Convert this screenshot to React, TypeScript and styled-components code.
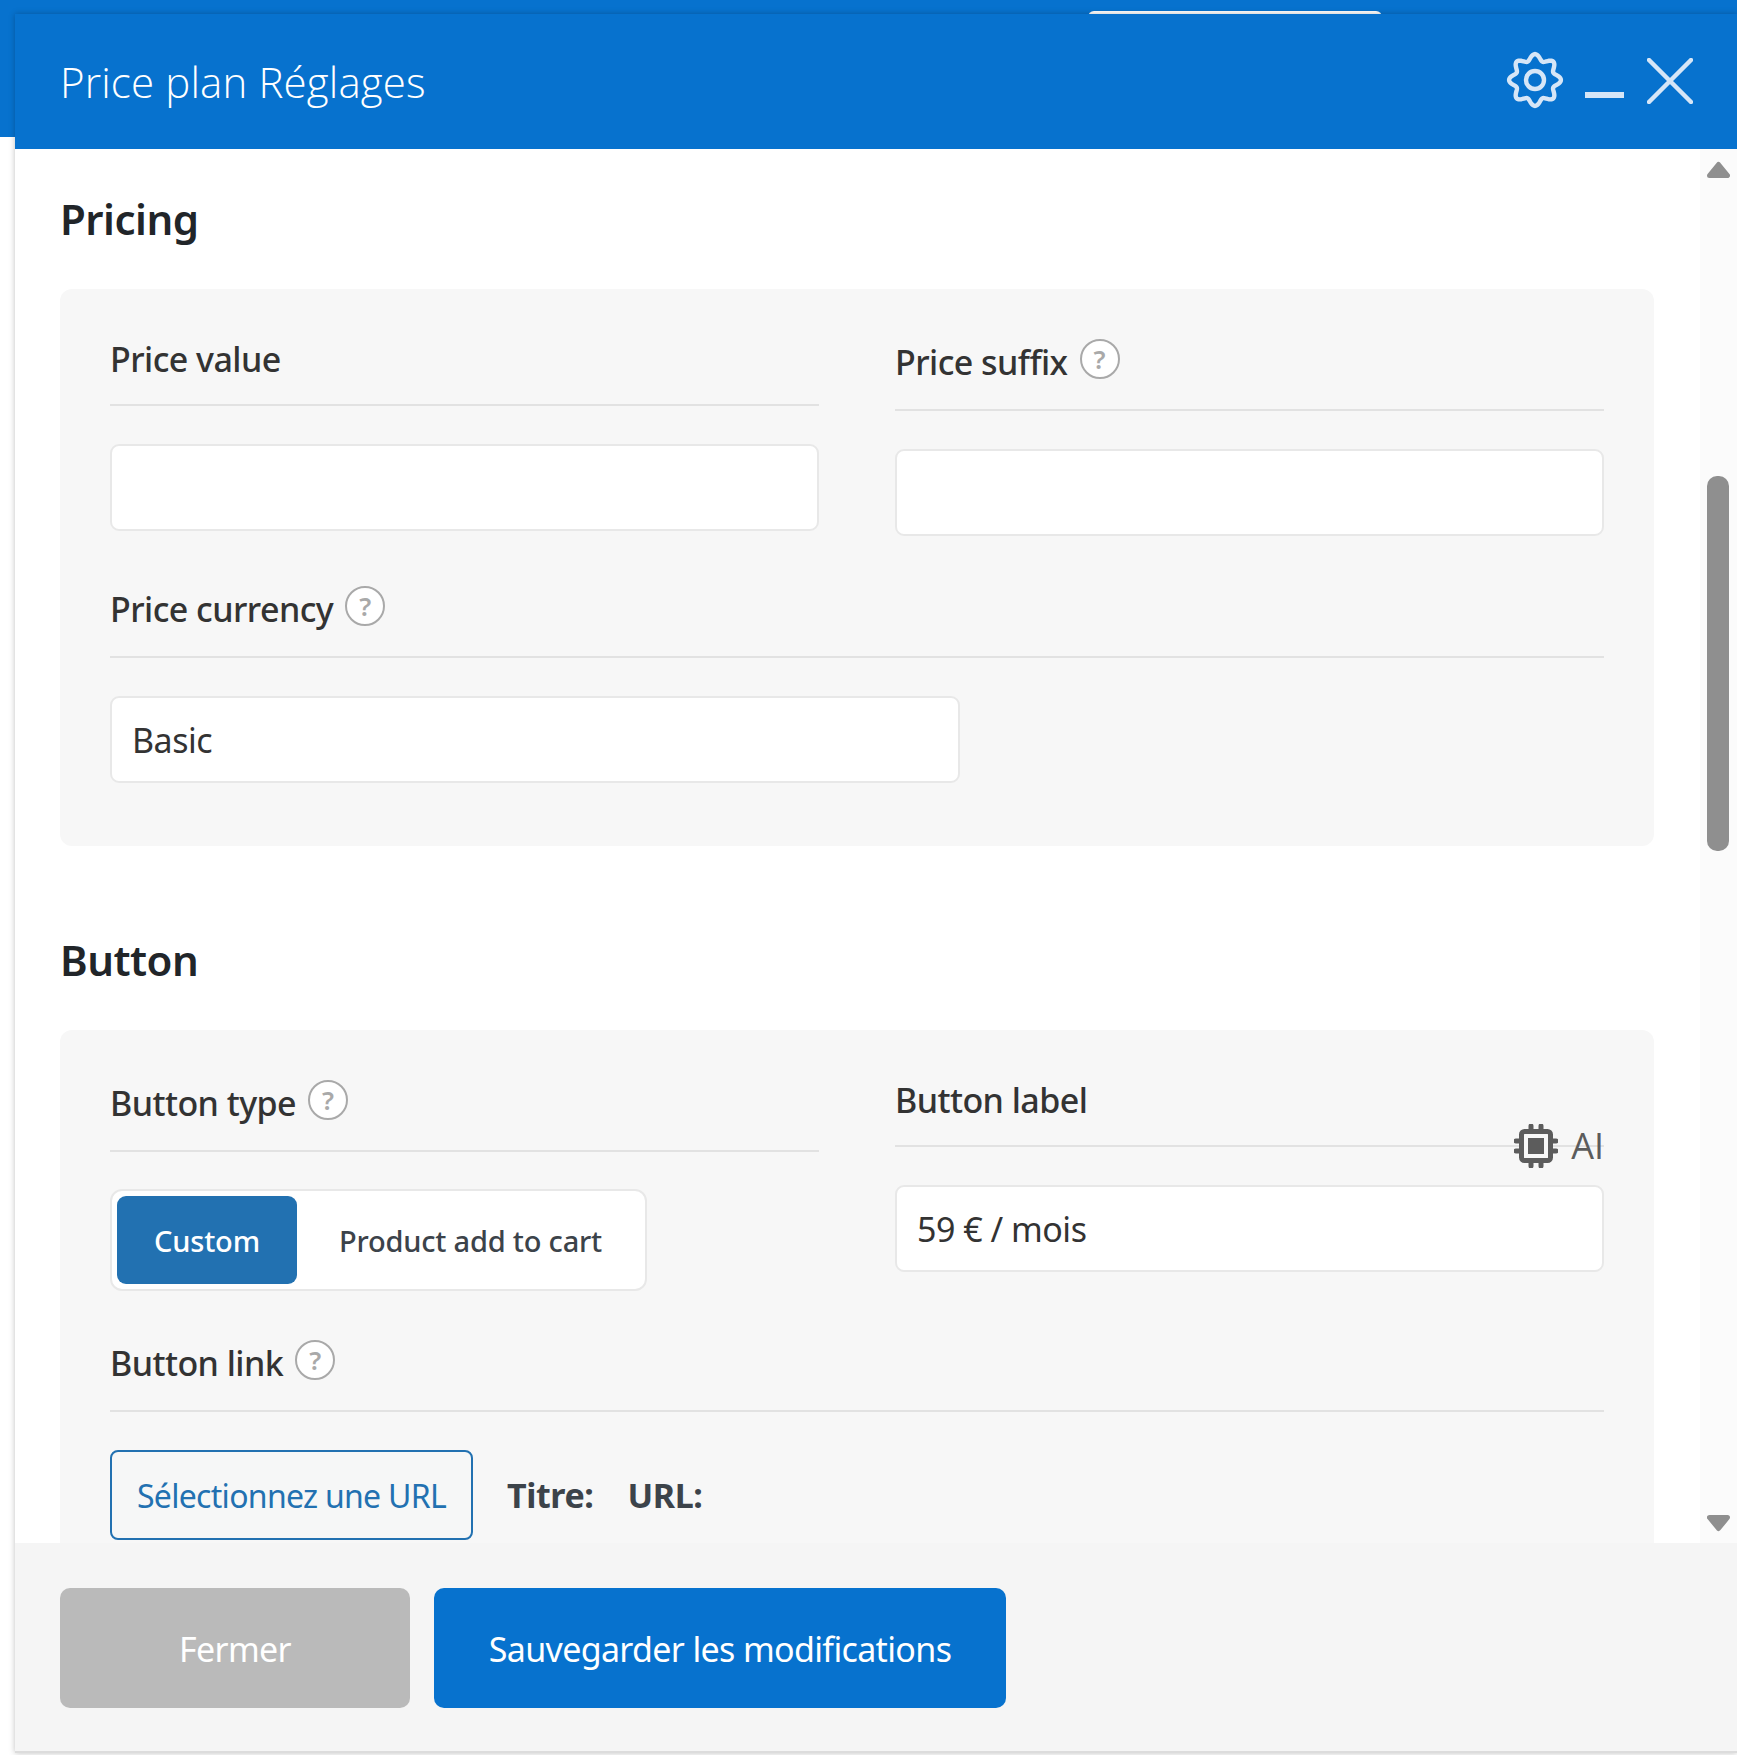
import { createGlobalStyle, styled } from "styled-components";

const GlobalStyle = createGlobalStyle`
  html, body {
    margin: 0;
    background: #fff;
  }
  * { box-sizing: border-box; }
  body { font-family: "Noto Sans", "Open Sans", sans-serif; color: #333; }
`;

// wavy 8 lobe outline of the settings gear
const gearPath = Array.from({ length: 160 }, (_, i) => {
  const angle = (i / 160) * Math.PI * 2;
  const radius = 22.8 + 3.1 * Math.cos(8 * angle);
  const x = 33 + radius * Math.cos(angle);
  const y = 33 + radius * Math.sin(angle);
  return `${i ? "L" : "M"}${x.toFixed(2)} ${y.toFixed(2)}`;
}).join(" ") + "Z";

const Page = styled.div`
  position: relative;
  width: 1737px;
  height: 1755px;
  overflow: hidden;
  padding: 14px 0 0 15px;
`;

const BackBar = styled.div`
  position: absolute;
  left: 0;
  top: 0;
  width: 100%;
  height: 137px;
  background: #0772ce;
`;

const BackPill = styled.div`
  position: absolute;
  left: 1088px;
  top: 11px;
  width: 294px;
  height: 6px;
  border-radius: 8px 8px 0 0;
  background: #fff;
`;

const Modal = styled.div`
  position: relative;
  display: flex;
  flex-direction: column;
  height: 1739px;
  background: #fff;
  box-shadow: 0 0 6px rgba(0, 0, 0, 0.25);
`;

const Header = styled.header`
  flex: none;
  height: 135px;
  display: flex;
  align-items: center;
  padding: 0 44px 0 45px;
  background: #0772ce;
  color: #fff;
`;

const Title = styled.h1`
  flex: 1;
  margin: 0 0 1px;
  font-family: "Open Sans", sans-serif;
  font-size: 42px;
  font-weight: 300;
  letter-spacing: 0.15px;
`;

const HeaderIcons = styled.div`
  display: flex;
  align-items: center;
  color: #d6e6f7;
  margin-bottom: 1px;
`;

const GearIcon = styled.svg`
  width: 66px;
  height: 66px;
  margin-top: -2px;
`;

const Minimize = styled.span`
  width: 39px;
  height: 6px;
  margin: 28px 23px 0 17px;
  background: currentColor;
`;

const Body = styled.div`
  position: relative;
  flex: 1;
  min-height: 0;
  overflow: hidden;
  padding: 0 83px 0 45px;
`;

const ScrollTrack = styled.div`
  position: absolute;
  right: 0;
  top: 0;
  bottom: 0;
  width: 37px;
  background: #fbfbfb;
`;

const ScrollThumb = styled.div`
  position: absolute;
  left: 7px;
  top: 327px;
  width: 22px;
  height: 375px;
  border-radius: 10px;
  background: #8f8f8f;
`;

const ScrollArrow = styled.svg<{ $down?: boolean }>`
  position: absolute;
  left: 7px;
  width: 23px;
  height: 17px;
  ${({ $down }) => ($down ? "bottom: 11px; transform: rotate(180deg);" : "top: 12px;")}
`;

const SectionTitle = styled.h2<{ $top: number }>`
  margin: ${({ $top }) => $top}px 0 0;
  height: 99px;
  font-size: 42px;
  line-height: 57px;
  font-weight: 600;
  color: #212529;
  letter-spacing: -0.5px;
`;

const Panel = styled.section`
  border-radius: 12px;
  background: #f7f7f7;
  padding: 47px 50px 63px;
  display: grid;
  grid-template-columns: 709px 709px;
  column-gap: 76px;
`;

const Field = styled.div<{ $wide?: boolean; $gap?: number }>`
  position: relative;
  ${({ $wide }) => $wide && "grid-column: 1 / -1;"}
  margin-bottom: ${({ $gap }) => $gap ?? 0}px;
`;

const Label = styled.div<{ $help?: boolean }>`
  display: flex;
  align-items: flex-start;
  gap: 12px;
  height: ${({ $help }) => ($help ? 75 : 70)}px;
  padding-top: ${({ $help }) => ($help ? 3 : 0)}px;
  border-bottom: 2px solid #e2e2e2;
  font-size: 34px;
  line-height: 46px;
  font-weight: 500;
  color: #333;
  letter-spacing: -0.55px;
  margin-bottom: 38px;
`;

const Help = styled.span`
  flex: none;
  width: 40px;
  height: 40px;
  display: flex;
  align-items: center;
  justify-content: center;
  border: 2px solid #a9a9a9;
  border-radius: 50%;
  background: #fff;
  color: #a9a9a9;
  font-size: 26px;
  font-weight: 600;
  letter-spacing: 0;
  line-height: 1;
`;

const TextInput = styled.div<{ $w?: number }>`
  width: ${({ $w }) => ($w ? `${$w}px` : "100%")};
  height: 87px;
  display: flex;
  align-items: center;
  padding: 0 20px;
  background: #fff;
  border: 2px solid #e8e8e8;
  border-radius: 9px;
  font-size: 34px;
  color: #333;
  letter-spacing: -0.5px;
`;

const AiTag = styled.div`
  position: absolute;
  right: 0;
  top: 47px;
  display: flex;
  align-items: center;
  gap: 13px;
  color: #5c5c5c;
  font-family: "Open Sans", sans-serif;
  font-size: 36px;
  line-height: 44px;
`;

const AiIcon = styled.svg`
  width: 44px;
  height: 44px;
`;

const Segmented = styled.div`
  width: 537px;
  height: 102px;
  padding: 5px;
  margin: -1px 0 46px;
  display: flex;
  align-items: stretch;
  background: #fff;
  border: 2px solid #e8e8e8;
  border-radius: 12px;
`;

const Segment = styled.div<{ $active?: boolean }>`
  display: flex;
  align-items: center;
  justify-content: center;
  width: ${({ $active }) => ($active ? "180px" : "auto")};
  padding: ${({ $active }) => ($active ? "0" : "0 0 0 42px")};
  border-radius: 9px;
  background: ${({ $active }) => ($active ? "#2271b1" : "transparent")};
  color: ${({ $active }) => ($active ? "#fff" : "#3c434a")};
  font-size: 29px;
  font-weight: 500;
  letter-spacing: -0.2px;
`;

const LinkRow = styled.div`
  display: flex;
  align-items: center;
  gap: 34px;
`;

const UrlButton = styled.div`
  width: 363px;
  height: 90px;
  display: flex;
  align-items: center;
  justify-content: center;
  background: #f6f7f7;
  border: 2px solid #2271b1;
  border-radius: 8px;
  color: #2271b1;
  font-size: 32px;
  letter-spacing: -0.7px;
`;

const LinkInfo = styled.strong`
  font-size: 34px;
  font-weight: 700;
  color: #3c434a;
  letter-spacing: -0.4px;
`;

const Footer = styled.footer`
  flex: none;
  height: 210px;
  display: flex;
  gap: 24px;
  padding: 45px 45px 0;
  background: #f5f5f5;
  border-bottom: 2px solid #dcdcdc;
`;

const FooterButton = styled.div<{ $primary?: boolean }>`
  width: ${({ $primary }) => ($primary ? "572px" : "350px")};
  height: 120px;
  padding-top: 1px;
  display: flex;
  align-items: center;
  justify-content: center;
  border-radius: 10px;
  background: ${({ $primary }) => ($primary ? "#0772ce" : "#bababa")};
  color: #fff;
  font-size: 34px;
  letter-spacing: -0.65px;
`;

const ArrowShape = () => (
  <path d="M11.5 3.5 20.5 14.5H2.5Z" fill="#8f8f8f" stroke="#8f8f8f" strokeWidth="5" strokeLinejoin="round" />
);

const App = () => (
  <>
    <GlobalStyle />
    <Page>
      <BackBar />
      <BackPill />
      <Modal>
        <Header>
          <Title>Price plan Réglages</Title>
          <HeaderIcons>
            <GearIcon viewBox="0 0 66 66" fill="none" stroke="currentColor" strokeWidth="4.4">
              <path d={gearPath} />
              <circle cx="33" cy="33" r="9" />
            </GearIcon>
            <Minimize />
            <svg width="46" height="46" viewBox="0 0 46 46">
              <path d="M2 2 44 44M44 2 2 44" stroke="currentColor" strokeWidth="4.5" strokeLinecap="round" />
            </svg>
          </HeaderIcons>
        </Header>
        <Body>
          <SectionTitle $top={41}>Pricing</SectionTitle>
          <Panel>
            <Field>
              <Label>Price value</Label>
              <TextInput />
            </Field>
            <Field $gap={47}>
              <Label $help>
                Price suffix <Help>?</Help>
              </Label>
              <TextInput />
            </Field>
            <Field $wide>
              <Label $help>
                Price currency <Help>?</Help>
              </Label>
              <TextInput $w={850}>Basic</TextInput>
            </Field>
          </Panel>
          <SectionTitle $top={85}>Button</SectionTitle>
          <Panel>
            <Field>
              <Label $help>
                Button type <Help>?</Help>
              </Label>
              <Segmented>
                <Segment $active>Custom</Segment>
                <Segment>Product add to cart</Segment>
              </Segmented>
            </Field>
            <Field>
              <Label>Button label</Label>
              <TextInput>59 € / mois</TextInput>
              <AiTag>
                <AiIcon viewBox="0 0 44 44">
                  <path
                    d="M17 2v6M27 2v6M17 36v6M27 36v6M2 17h6M2 27h6M36 17h6M36 27h6"
                    stroke="#5c5c5c"
                    strokeWidth="5"
                    strokeLinecap="round"
                  />
                  <rect x="7.5" y="7.5" width="29" height="29" rx="3" fill="#f7f7f7" stroke="#5c5c5c" strokeWidth="5" />
                  <rect x="14" y="14" width="16" height="16" fill="#5c5c5c" />
                </AiIcon>
                AI
              </AiTag>
            </Field>
            <Field $wide>
              <Label $help>
                Button link <Help>?</Help>
              </Label>
              <LinkRow>
                <UrlButton>Sélectionnez une URL</UrlButton>
                <LinkInfo>Titre:</LinkInfo>
                <LinkInfo>URL:</LinkInfo>
              </LinkRow>
            </Field>
          </Panel>
          <ScrollTrack>
            <ScrollArrow viewBox="0 0 23 17">
              <ArrowShape />
            </ScrollArrow>
            <ScrollThumb />
            <ScrollArrow $down viewBox="0 0 23 17">
              <ArrowShape />
            </ScrollArrow>
          </ScrollTrack>
        </Body>
        <Footer>
          <FooterButton>Fermer</FooterButton>
          <FooterButton $primary>Sauvegarder les modifications</FooterButton>
        </Footer>
      </Modal>
    </Page>
  </>
);

export default App;
